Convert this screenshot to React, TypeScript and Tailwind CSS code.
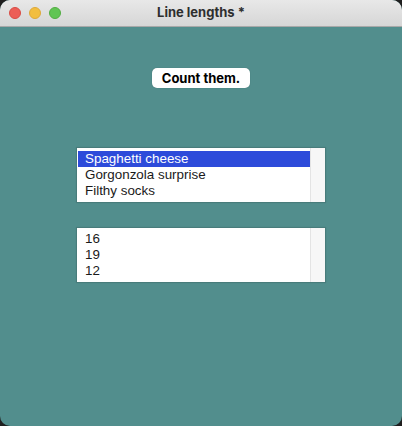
import React from "react";

function ListBox({ items, selected }: { items: string[]; selected?: number }) {
  return (
    <div className="flex w-[248px] h-[54px] bg-white shadow-[0_0_1px_1px_rgba(0,0,0,0.12)]">
      <div className="flex-1 pl-[1px] pt-[3px] flex flex-col">
        {items.map((t, i) => (
          <div
            key={i}
            className={
              "h-[16px] leading-[16px] pl-[7px] text-[13.4px] " +
              (i === selected ? "bg-[#2d4bda] text-white" : "text-[#1a1a1a]")
            }
          >
            {t}
          </div>
        ))}
      </div>
      <div className="w-[15px] bg-[#f7f7f7] border-l border-[#e4e4e4]" />
    </div>
  );
}

export default function App() {
  return (
    <div className="w-[402px] h-[426px] bg-[#1f1f1f]" style={{ fontFamily: '"Liberation Sans", Arial, sans-serif' }}>
      <div className="w-[402px] h-[426px] rounded-[10px] overflow-hidden flex flex-col bg-[#528e8d]">
        <div className="relative h-[27px] bg-gradient-to-b from-[#e8e8e8] to-[#d6d6d6] border-b border-[#a8a8a8] flex items-center justify-center">
          <div className="absolute left-[9px] top-[7px] flex gap-[8px]">
            <div className="w-[12px] h-[12px] rounded-full bg-[#ec5e57] border border-[#d84c45]" />
            <div className="w-[12px] h-[12px] rounded-full bg-[#f2be3f] border border-[#dda93a]" />
            <div className="w-[12px] h-[12px] rounded-full bg-[#61c554] border border-[#52ad42]" />
          </div>
          <span className="text-[13px] font-bold text-[#2e2e2e]" style={{ fontFamily: 'Inter, "Liberation Sans", sans-serif' }}>
            Line lengths *
          </span>
        </div>
        <div className="flex flex-col items-center">
          <button className="mt-[41px] w-[98px] h-[20px] rounded-[5px] bg-white text-[13px] font-bold text-black leading-[20px] shadow-[0_0_1px_rgba(0,0,0,0.3)]" style={{ fontFamily: 'Inter, "Liberation Sans", sans-serif' }}>
            Count them.
          </button>
          <div className="mt-[60px]">
            <ListBox items={["Spaghetti cheese", "Gorgonzola surprise", "Filthy socks"]} selected={0} />
          </div>
          <div className="mt-[26px]">
            <ListBox items={["16", "19", "12"]} />
          </div>
        </div>
      </div>
    </div>
  );
}
